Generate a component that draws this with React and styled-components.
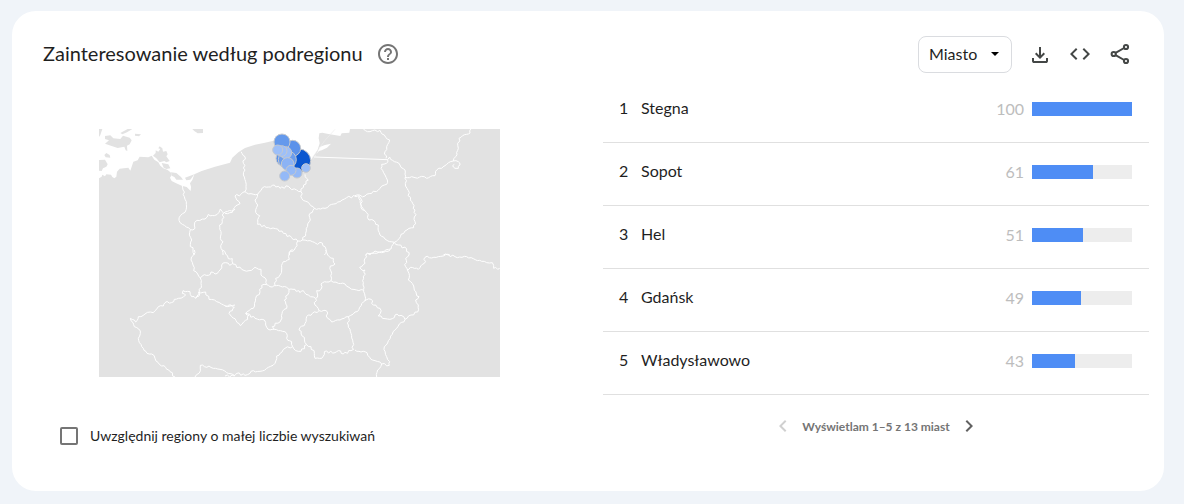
import styled, { createGlobalStyle } from "styled-components";

const cities = [
	{ name: "Stegna", value: 100 },
	{ name: "Sopot", value: 61 },
	{ name: "Hel", value: 51 },
	{ name: "Gdańsk", value: 49 },
	{ name: "Władysławowo", value: 43 },
];

// map sheets, each with its own origin
const sheets = [
	{
		x: -12,
		y: -12,
		d: "M262 182L264 195 268 215 274 238 270 262 256 272 252 286 262 298 286 314 284 322 290 345 286 358 294 375 298 390M286 314L300 310 298 300 306 286 330 282 340 268 358 272 372 262 376 252 386 264 410 258 420 252M386 264L382 290 374 300 378 320 376 340 384 350 378 370 384 390",
	},
	{
		x: 378,
		y: -12,
		d: "M48 80L60 95 55 115 60 135 55 150 62 170 60 200 48 208 30 213 45 236 28 248 22 262 0 265M60 200L78 206 98 208 118 185 130 186 148 180 165 190 190 184 200 194 215 195 228 200 236 180 250 165 240 148M98 208L90 225 98 240 92 262 104 272 98 298 130 308 158 312 175 325 200 338 218 348 233 345M228 200L230 220 250 232 268 250 262 262 252 270 256 285 244 310 242 325 233 345M268 250L300 250 320 238 345 230 365 218 400 212 408 222 410 245 420 258M218 348L216 362 208 375 196 378 194 390M233 345L262 350 278 358 285 352 300 365 304 380 298 390",
	},
	{
		x: 768,
		y: -12,
		d: "M25 12L45 20 75 16 88 30 104 45 95 65 90 80 93 100M98 104L104 96 118 110 135 120 150 135 150 160 156 190 166 225 180 255 180 290 176 308 150 318 138 328 128 345 118 352 108 372 80 380 60 378 45 386 32 390M98 104L94 115 80 118 78 130 90 150 97 165 95 178 75 190 50 205 30 213 0 212M150 158L170 155 180 158 200 154 215 160 240 152 245 135 260 130 275 118 295 108 302 95 310 70 312 40 335 28 345 24 347 12M295 108L310 110 315 120 310 130 300 130 293 122 298 118M12 212L18 248 34 262 42 285 58 288 62 298 70 300 75 330 90 342 118 352 130 360 155 372 162 390M265 390L272 387 285 390",
	},
	{
		x: -12,
		y: 363,
		d: "M298 0L296 15 288 30 294 45 296 62 308 72 316 84 318 100 314 125 302 145 290 140 285 125 264 122 262 130 272 135 250 145 238 148 236 155 210 158 205 168 190 170 175 188 166 186 150 192 130 200 122 216 118 210 106 205 114 218 118 230 136 243 130 265 145 295 156 310 170 312 180 325 200 348 212 352 225 365 240 381M316 84L328 74 340 76 348 66 360 72 375 60 380 45 392 38 404 46 414 40 412 26 400 26 392 12 382 0M302 145L312 138 310 126 332 126 342 148 365 155 386 165 405 168 420 165M300 381L312 370 316 346 328 350 342 348 355 355 375 358 395 368 420 378",
	},
	{
		x: 378,
		y: 363,
		d: "M0 168L18 165 28 172 22 182 12 190 20 200 30 206 46 227 68 208 72 195 62 190M24 42L50 58 72 62 90 52 108 58 108 75 124 90 125 104M110 106L125 104 135 110 160 106 185 112 192 118 210 118 225 128 235 122 250 135 272 145 278 135 275 122 288 118 288 102 305 96 318 92 340 100 360 102 372 112 395 120 415 120M205 0L195 5 193 28 175 35 170 60 165 75 152 85 150 106M302 0L308 15 325 25 330 42 316 48 320 70 318 92M110 106L105 125 92 145 85 175 62 190 90 205 118 210 122 225 135 240 148 238 142 230 168 210 172 185 185 175 178 150 188 135 192 118M148 238L185 250 185 265 200 275 203 290 212 302 228 304 245 284 258 290 268 310 270 325 290 325 298 305 330 308 340 302 355 312 378 302 386 298M272 145L270 165 282 182 262 190 245 200 240 220 222 240 238 262 245 284M282 182L304 182 308 205 320 216 345 210 370 200 370 225 378 250 385 298M370 200L390 186M0 378L28 378 36 370 60 376 75 370 85 362 105 364 130 352 150 340 155 318 180 295 203 290",
	},
	{
		x: 768,
		y: 363,
		d: "M105 0L92 4 80 8 50 10 32 14 30 40 14 52 24 62 30 60 26 85 26 125 30 152 12 178 0 186M30 152L48 148 55 165 75 175 76 190 70 198 90 206 112 206 120 195 138 196 150 208M162 15L152 25 152 50 162 70 160 90 176 108 184 132 192 140 182 150 190 165 188 186 168 195 150 208 125 235 88 290 95 320 104 335 103 346 80 342 60 332 44 322 36 308 18 306 0 300M80 342L68 360 65 381M156 60L166 52 190 58 208 40 210 22 250 20 272 14 300 20 335 20 355 26 380 34 395 38 412 38 416 55 434 55",
	},
];

const bubbles = [
	[600, 95, 35, "#0b57d0"],
	[581, 58, 24, "#5c92ea"],
	[549, 39, 24, "#6499ec"],
	[555, 88, 24, "#5c92ea"],
	[565, 92, 27, "#6b9ded"],
	[560, 71, 18, "#9dbff8"],
	[548, 66, 16, "#9dbff8"],
	[536, 63, 15, "#9dbff8"],
	[566, 105, 19, "#8cb3f5"],
	[594, 132, 15, "#94b9f7"],
	[576, 124, 15, "#94b9f7"],
	[557, 141, 15, "#94b9f7"],
	[621, 117, 13, "#9dbff8"],
];

const offsets = [3, -2, 1, -3, 2, 3, -1, -3, 0, 2, -2];

// adds small bends to each border so it runs like a river, ends stay in place
const roughen = (d) => {
	return d
		.split("M")
		.filter(Boolean)
		.map((line) => {
			const n = line.match(/\d+/g).map(Number);
			let out = `M${n[0]} ${n[1]}`;
			for (let i = 2; i < n.length; i += 2) {
				const dx = n[i] - n[i - 2];
				const dy = n[i + 1] - n[i - 1];
				const len = Math.hypot(dx, dy);
				const steps = Math.max(1, Math.round(len / 7));
				for (let s = 1; s < steps; s++) {
					const o = offsets[(i * 3 + s * 2 + n[i]) % offsets.length];
					const x = n[i - 2] + (dx * s) / steps - (dy / len) * o;
					const y = n[i - 1] + (dy * s) / steps + (dx / len) * o;
					out += `L${x.toFixed(1)} ${y.toFixed(1)}`;
				}
				out += `L${n[i]} ${n[i + 1]}`;
			}
			return out;
		})
		.join("");
};

const RegionMap = () => {
	return (
		<MapSvg viewBox="0 0 1203 744" role="img" aria-label="Mapa Polski">
			<rect width="1203" height="744" fill="#e2e2e2" />
			<g transform="translate(-12 -12)">
				<path
					fill="#fff"
					d="M12 12L12 160 20 155 22 149 30 154 34 148 48 149 52 156 58 160 64 155 66 140 74 131 100 128 106 137 110 125 115 110 128 106 134 95 160 97 170 92 178 104 190 112 196 122 205 130 218 135 228 143 230 150 225 158 230 168 242 174 260 182 275 186 287 198 288 185 285 175 292 165 298 148 320 138 360 125 405 113 412 98 430 82 450 69 480 59 510 53 545 45 575 70 605 110 645 108 654 96 668 74 674 55 671 40 673 25 682 23 700 27 736 33 740 25 763 23 765 12Z"
				/>
				<path fill="#fff" d="M654 106L668 80 674 66 690 60 708 56 696 68 680 76 672 78 660 92Z" />
				<path stroke="#ededed" strokeWidth="2" fill="none" d="M652 98L690 46 720 13" />
				<path
					fill="#e2e2e2"
					d="M12 105L30 104 38 118 34 125 24 130 20 138 12 137ZM28 90L34 84 44 90 46 98 32 97ZM30 33L46 31 55 40 76 42 84 32 104 38 110 46 104 58 96 62 97 78 92 76 88 65 68 69 30 56 42 46 30 42ZM76 24L98 12 112 12 96 22 82 28ZM120 26L138 28 132 34 120 32ZM12 12L22 12 16 30 12 36ZM292 12L324 12 324 24 308 25 298 18ZM174 92L182 84 182 76 190 80 196 72 190 70 194 64 202 70 204 80 214 78 218 88 214 94 224 108 214 112 208 108 194 112 184 100ZM200 114L220 118 226 130 214 132 206 128ZM228 142L244 144 258 156 264 164 244 164 238 156 230 152ZM270 158L298 148 286 164 274 166Z"
				/>
			</g>
			{sheets.map((s, i) => (
				<Border key={i} d={roughen(s.d)} transform={`translate(${s.x} ${s.y})`} />
			))}
			<Border d="M646 84L866 92" />
			{bubbles.map(([x, y, r, fill], i) => (
				<circle key={i} cx={x} cy={y} r={r} fill={fill} stroke="#c4c8ce" strokeWidth="3" />
			))}
		</MapSvg>
	);
};

const App = () => {
	return (
		<>
			<GlobalStyle />
			<Card>
				<Header>
					<Title>Zainteresowanie według podregionu</Title>
					<HelpButton aria-label="Pomoc">
						<Icon viewBox="0 0 24 24">
							<path d="M11 18h2v-2h-2v2zm1-16C6.48 2 2 6.48 2 12s4.48 10 10 10 10-4.48 10-10S17.52 2 12 2zm0 18c-4.41 0-8-3.59-8-8s3.59-8 8-8 8 3.59 8 8-3.59 8-8 8zm0-14c-2.21 0-4 1.79-4 4h2c0-1.1.9-2 2-2s2 .9 2 2c0 2-3 1.75-3 5h2c0-2.25 3-2.5 3-5 0-2.21-1.79-4-4-4z" />
						</Icon>
					</HelpButton>
					<SelectBox>
						<Select aria-label="Rozdzielczość" defaultValue="city">
							<option value="city">Miasto</option>
							<option value="region">Podregion</option>
						</Select>
						<Arrow viewBox="0 0 8 4">
							<path d="M0 0h8L4 4z" />
						</Arrow>
					</SelectBox>
					<Tools>
						<ToolButton aria-label="Pobierz">
							<Icon viewBox="0 -1 24 24">
								<path d="M12 16L7 11l1.4-1.45 2.6 2.6V4h2v8.15l2.6-2.6L17 11l-5 5Zm-6 4q-.825 0-1.413-.587Q4 18.825 4 18v-3h2v3h12v-3h2v3q0 .825-.587 1.413Q18.825 20 18 20Z" />
							</Icon>
						</ToolButton>
						<ToolButton aria-label="Umieść">
							<Icon viewBox="0 0 24 24">
								<path d="M9.4 16.6L4.8 12l4.6-4.6L8 6l-6 6 6 6 1.4-1.4zm5.2 0l4.6-4.6-4.6-4.6L16 6l6 6-6 6-1.4-1.4z" />
							</Icon>
						</ToolButton>
						<ToolButton aria-label="Udostępnij">
							<Icon viewBox="0 0 24 24">
								<g fill="none" stroke="currentColor" strokeWidth="2">
									<circle cx="5.7" cy="12" r="2.1" />
									<circle cx="18" cy="5" r="2.1" />
									<circle cx="18" cy="19" r="2.1" />
									<path d="M7.6 10.9L16.1 6M7.6 13.1L16.1 18" />
								</g>
							</Icon>
						</ToolButton>
					</Tools>
				</Header>
				<Content>
					<MapSide>
						<RegionMap />
						<CheckLabel>
							<Checkbox type="checkbox" />
							Uwzględnij regiony o małej liczbie wyszukiwań
						</CheckLabel>
					</MapSide>
					<ListSide>
						<List>
							{cities.map((c, i) => (
								<Row key={c.name}>
									<Rank>{i + 1}</Rank>
									<Name>{c.name}</Name>
									<Value>{c.value}</Value>
									<Track>
										<Bar style={{ width: `${c.value}%` }} />
									</Track>
								</Row>
							))}
						</List>
						<Pager>
							<PageButton aria-label="Poprzednie" disabled>
								<Icon viewBox="0 0 24 24">
									<path d="M15.41 7.41L14 6l-6 6 6 6 1.41-1.41L10.83 12z" />
								</Icon>
							</PageButton>
							Wyświetlam 1–5 z 13 miast
							<PageButton aria-label="Następne">
								<Icon viewBox="0 0 24 24">
									<path d="M10 6L8.59 7.41 13.17 12l-4.58 4.59L10 18l6-6z" />
								</Icon>
							</PageButton>
						</Pager>
					</ListSide>
				</Content>
			</Card>
		</>
	);
};

export default App;

const GlobalStyle = createGlobalStyle`
	* {
		box-sizing: border-box;
	}
	body {
		margin: 0;
		background: #f0f4f9;
		color: #1f1f1f;
		font-family: Lato, "Liberation Sans", sans-serif;
	}
	button, select {
		font-family: inherit;
		color: inherit;
	}
`;

const Card = styled.section`
	margin: 11px 20px 13px 12px;
	padding: 25px 0 43px;
	border-radius: 24px;
	background: #fff;
`;

const Header = styled.header`
	display: flex;
	align-items: center;
	padding: 0 24px 0 31px;
`;

const Title = styled.h2`
	margin: 0;
	padding-bottom: 3px;
	font-size: 20px;
	line-height: 24px;
	font-weight: 400;
`;

const IconButton = styled.button`
	display: flex;
	align-items: center;
	justify-content: center;
	padding: 0;
	border: 0;
	background: none;
`;

const HelpButton = styled(IconButton)`
	margin: 0 auto 0 13px;
	padding-bottom: 2px;
	color: #757575;
`;

const ToolButton = styled(IconButton)`
	width: 40px;
	height: 36px;
	padding-bottom: 2px;
	color: #444746;
`;

const PageButton = styled(IconButton)`
	width: 24px;
	height: 24px;
	color: ${({ disabled }) => (disabled ? "#d0d0d0" : "#616161")};
`;

const Icon = styled.svg`
	width: 24px;
	height: 24px;
	fill: currentColor;
`;

const SelectBox = styled.div`
	position: relative;
`;

const Select = styled.select`
	appearance: none;
	display: block;
	height: 37px;
	width: 94px;
	padding: 0 10px 2px;
	border: 1px solid #dadce0;
	border-radius: 8px;
	background: #fff;
	font-size: 16px;
`;

const Arrow = styled.svg`
	position: absolute;
	right: 13px;
	top: 16px;
	width: 8px;
	height: 4px;
	pointer-events: none;
`;

const Tools = styled.div`
	display: flex;
	margin-left: 8px;
`;

const Content = styled.div`
	display: grid;
	grid-template-columns: 591fr 561fr;
	padding-top: 7px;
`;

const MapSide = styled.div`
	padding: 49px 103px 0 87px;
`;

const MapSvg = styled.svg`
	display: block;
	width: 100%;
`;

const Border = styled.path`
	fill: none;
	stroke: #fff;
	stroke-width: 3;
	stroke-linejoin: round;
`;

const CheckLabel = styled.label`
	display: flex;
	align-items: center;
	margin: 47px 0 0 -39px;
	font-size: 14px;
	line-height: 24px;
	white-space: nowrap;
`;

const Checkbox = styled.input`
	appearance: none;
	width: 18px;
	height: 18px;
	margin: 0 12px 0 0;
	border: 2px solid #757575;
	border-radius: 2px;
`;

const ListSide = styled.div`
	padding-right: 15px;
`;

const List = styled.ol`
	margin: 0;
	padding: 0;
	list-style: none;
`;

const Row = styled.li`
	display: flex;
	align-items: center;
	height: 63px;
	padding: 0 17px 4px 16px;
	border-bottom: 1px solid #e0e0e0;
	font-size: 16px;
	line-height: 24px;
`;

const Rank = styled.span`
	width: 22px;
	padding-bottom: 2px;
`;

const Name = styled.span`
	flex: 1;
	padding-bottom: 2px;
`;

const Value = styled.span`
	margin-right: 8px;
	color: #bdbdbd;
`;

const Track = styled.div`
	width: 100px;
	height: 14px;
	background: #ededed;
`;

const Bar = styled.div`
	height: 100%;
	background: #4e8df5;
`;

const Pager = styled.div`
	display: flex;
	align-items: center;
	justify-content: center;
	gap: 7px;
	padding-top: 19px;
	color: #757575;
	font-size: 12px;
	font-weight: 700;
`;
